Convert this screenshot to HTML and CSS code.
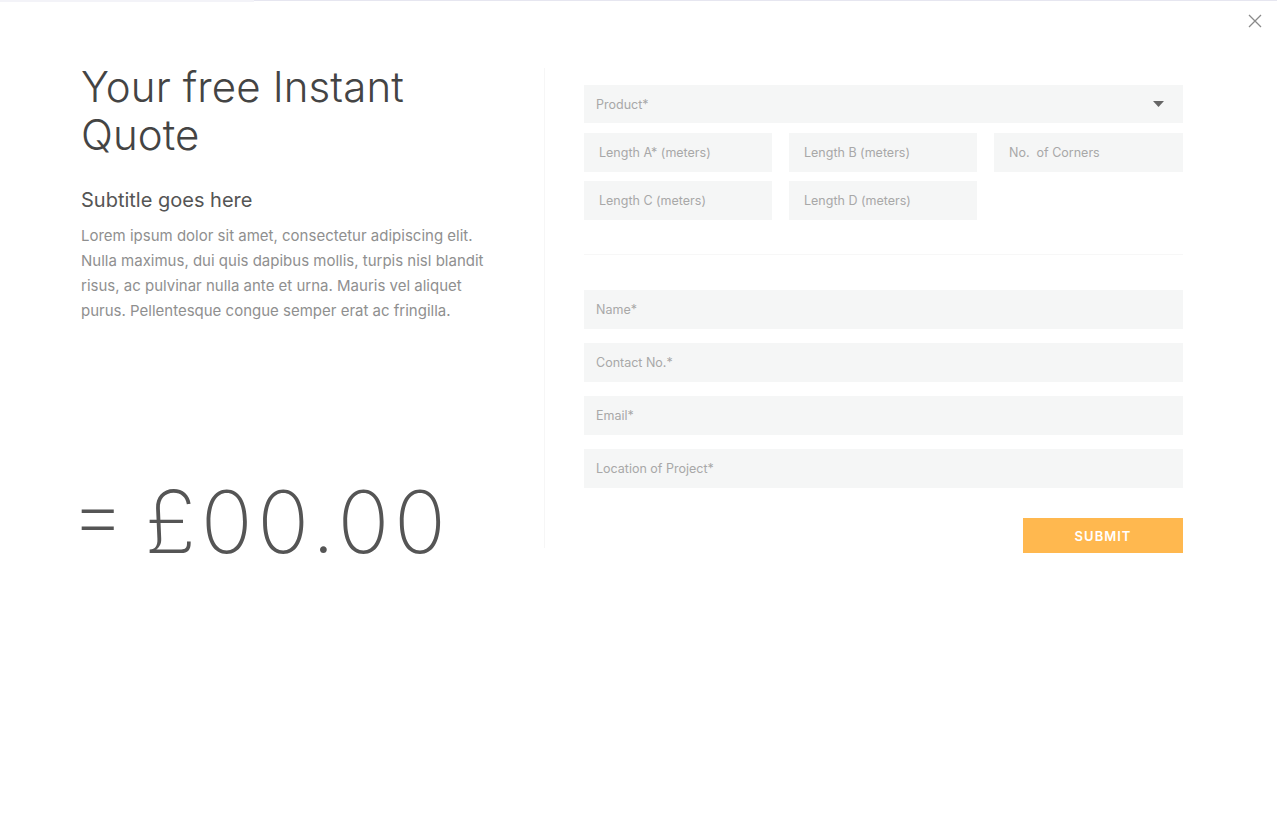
FILE: index.html
```html
<!DOCTYPE html>
<html lang="en">
<head>
<meta charset="utf-8">
<title>Instant Quote</title>
<link rel="stylesheet" href="styles.css">
</head>
<body>
<div class="topbar"><span class="topbar-done"></span><span class="topbar-rest"></span></div>
<button class="close" aria-label="Close">
  <svg width="14" height="14" viewBox="0 0 14 14"><path d="M1 1 L13 13 M13 1 L1 13" stroke="#8a8a8a" stroke-width="1.3" fill="none"/></svg>
</button>
<main class="quote">
  <section class="intro">
    <h1 class="title">Your free Instant Quote</h1>
    <h2 class="subtitle">Subtitle goes here</h2>
    <p class="lead">Lorem ipsum dolor sit amet, consectetur adipiscing elit. Nulla maximus, dui quis dapibus mollis, turpis nisl blandit risus, ac pulvinar nulla ante et urna. Mauris vel aliquet purus. Pellentesque congue semper erat ac fringilla.</p>
    <div class="price"><span class="eq">=</span><span class="amount">£00.00</span></div>
  </section>
  <section class="form">
    <div class="field select"><span>Product*</span><svg width="11" height="7" viewBox="0 0 11 7"><path d="M0 0 H11 L5.5 6 Z" fill="#666"/></svg></div>
    <div class="grid3">
      <div class="field small"><span>Length A* (meters)</span></div>
      <div class="field small"><span>Length B (meters)</span></div>
      <div class="field small"><span>No.&nbsp; of Corners</span></div>
      <div class="field small"><span>Length C (meters)</span></div>
      <div class="field small"><span>Length D (meters)</span></div>
    </div>
    <hr class="sep">
    <div class="contact">
      <div class="field"><span>Name*</span></div>
      <div class="field"><span>Contact No.*</span></div>
      <div class="field"><span>Email*</span></div>
      <div class="field"><span>Location of Project*</span></div>
    </div>
    <div class="actions"><button class="submit">SUBMIT</button></div>
  </section>
</main>
</body>
</html>
```
FILE: styles.css
```css
* { box-sizing: border-box; }
html, body { margin: 0; padding: 0; background: #fff; }
body {
  font-family: "Open Sans", "Noto Sans", sans-serif;
  color: #555;
  width: 1277px;
  height: 838px;
  overflow: hidden;
  position: relative;
}
.topbar { display: flex; height: 2px; }
.topbar-done { width: 254px; background: #f3f3f8; }
.topbar-rest { flex: 1; background: #e6e6f0; height: 1px; }
.close {
  position: absolute;
  top: 14px;
  right: 15px;
  border: 0;
  background: none;
  padding: 0;
  width: 14px;
  height: 14px;
  display: flex;
}
.quote {
  display: flex;
  align-items: flex-start;
  padding: 64px 0 0 81px;
}
.intro {
  width: 463px;
  padding-right: 40px;
  display: flex;
  flex-direction: column;
}
.title {
  margin: -3px 0 0;
  font-family: "Inter", sans-serif;
  font-weight: 300;
  font-size: 42px;
  line-height: 48px;
  letter-spacing: 0.1px;
  color: #444;
}
.subtitle {
  margin: 28px 0 0;
  font-family: "Inter", sans-serif;
  font-weight: 400;
  font-size: 20px;
  line-height: 26px;
  color: #555;
}
.lead {
  margin: 10px 0 0;
  font-family: "Inter", sans-serif;
  font-size: 15px;
  line-height: 25px;
  color: #8f8f8f;
}
.price {
  margin-top: 151px;
  display: flex;
  align-items: flex-start;
  gap: 19px;
  font-family: "Inter", sans-serif;
  font-weight: 200;
  color: #555;
}
.eq { font-size: 86px; line-height: 78px; margin-left: -11px; }
.amount { font-size: 86px; line-height: 96px; letter-spacing: 4.5px; }
.form {
  width: 639px;
  height: 480px;
  border-left: 1px solid #f6f6f6;
  padding: 17px 0 0 39px;
  margin-top: 2px;
}
.field {
  background: #f5f6f6;
  height: 39px;
  display: flex;
  align-items: center;
  justify-content: space-between;
  padding: 0 12px;
  font-family: "Inter", sans-serif;
  font-size: 12.5px;
  color: #a8a8a8;
}
.select { height: 38px; padding-right: 19px; }
.small { padding: 0 15px; }
.grid3 {
  margin-top: 10px;
  display: grid;
  grid-template-columns: 188px 188px 189px;
  column-gap: 17px;
  row-gap: 9px;
}
.sep {
  border: 0;
  border-top: 1px solid #f7f7f7;
  margin: 34px 0 0;
}
.contact {
  margin-top: 35px;
  display: flex;
  flex-direction: column;
  gap: 14px;
}
.actions {
  display: flex;
  justify-content: flex-end;
  margin-top: 30px;
}
.submit {
  width: 160px;
  height: 35px;
  border: 0;
  background: #ffb84f;
  color: #fff;
  font-family: "Inter", sans-serif;
  font-weight: 600;
  font-size: 13px;
  letter-spacing: 1px;
}
```
